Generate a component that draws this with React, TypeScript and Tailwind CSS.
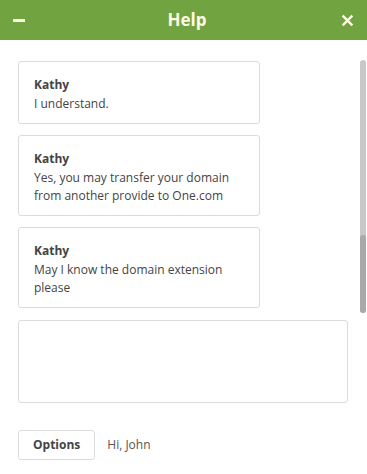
const messages = [
  { name: 'Kathy', text: 'I understand.' },
  { name: 'Kathy', text: 'Yes, you may transfer your domain from another provide to One.com' },
  { name: 'Kathy', text: 'May I know the domain extension please' },
];

export default function App() {
  return (
    <div className="w-[367px] h-[474px] bg-white text-[#444] font-['Open_Sans',sans-serif] overflow-hidden">
      <div className="h-10 bg-[#71a341] flex items-center justify-between px-[13px] text-[#fffbe3]">
        <div className="w-3 h-[3px] bg-[#fffbe3]" />
        <h1 className="text-[17px] font-bold ml-2">Help</h1>
        <svg className="w-[13px] h-[13px]" viewBox="0 0 12 12" fill="none" stroke="currentColor" strokeWidth={2.2}>
          <path d="M1.5 1.5l9 9M10.5 1.5l-9 9" />
        </svg>
      </div>

      <div className="flex pt-5">
        <div className="flex flex-col gap-[11px] pl-[18px] pt-px w-[260px]">
          {messages.map((m, i) => (
            <div key={i} className="border border-[#dcdcdc] rounded-[3px] px-[15px] pt-[12px] pb-[10px] text-[12px] leading-[19px]">
              <div className="font-bold text-[12px] leading-[21px]">{m.name}</div>
              <div className="leading-[18px]">{m.text}</div>
            </div>
          ))}
        </div>
        <div className="ml-auto mr-[1px] w-[6px] h-[253px] rounded-full bg-[#c8c8c8] flex flex-col justify-end">
          <div className="h-[78px] rounded-full bg-[#a9a9a9]" />
        </div>
      </div>

      <div className="mt-[7px] ml-[18px] w-[330px] h-[83px] border border-[#dcdcdc] rounded-[3px]" />

      <div className="flex items-center gap-3 ml-[18px] mt-[27px]">
        <button className="h-[30px] px-[14px] border border-[#dcdcdc] rounded-[3px] text-[12px] font-bold text-[#444]">
          Options
        </button>
        <span className="text-[12px] text-[#555]">Hi, John</span>
      </div>
    </div>
  );
}
